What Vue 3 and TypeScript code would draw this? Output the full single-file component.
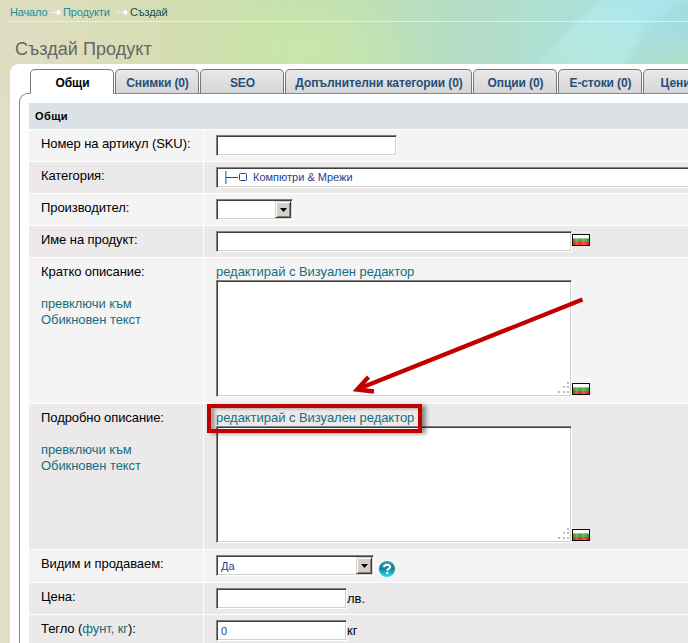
<script setup lang="ts">
interface Tab {
  label: string
  width: number
}

interface Row {
  kind: 'text' | 'category' | 'select' | 'area'
  label: string
  height: number
  width: number
  unitLink?: string
  value?: string
  suffix?: string
  flag?: boolean
  help?: boolean
  switchable?: boolean
  tone: 'light' | 'dark'
}

const tabs: Tab[] = [
  { label: 'Общи', width: 84 },
  { label: 'Снимки (0)', width: 84 },
  { label: 'SEO', width: 84 },
  { label: 'Допълнителни категории (0)', width: 187 },
  { label: 'Опции (0)', width: 84 },
  { label: 'Е-стоки (0)', width: 84 },
  { label: 'Цени', width: 64 },
]

const rows: Row[] = [
  { kind: 'text', label: 'Номер на артикул (SKU):', height: 31, width: 181, tone: 'light' },
  { kind: 'category', label: 'Категория:', height: 31, width: 490, value: 'Компютри & Мрежи', tone: 'dark' },
  { kind: 'select', label: 'Производител:', height: 31, width: 77, tone: 'light' },
  { kind: 'text', label: 'Име на продукт:', height: 31, width: 356, flag: true, tone: 'dark' },
  { kind: 'area', label: 'Кратко описание:', height: 145, width: 356, flag: true, switchable: true, tone: 'light' },
  { kind: 'area', label: 'Подробно описание:', height: 145, width: 356, flag: true, switchable: true, tone: 'dark' },
  { kind: 'select', label: 'Видим и продаваем:', height: 32, width: 158, value: 'Да', help: true, tone: 'light' },
  { kind: 'text', label: 'Цена:', height: 31, width: 131, suffix: 'лв.', tone: 'dark' },
  { kind: 'text', label: 'Тегло', unitLink: 'фунт, кг', height: 31, width: 131, value: '0', suffix: 'кг', tone: 'dark' },
]
</script>

<template>
  <div class="page">
    <header class="top">
      <svg class="sky" viewBox="0 0 688 100" preserveAspectRatio="none">
        <defs>
          <linearGradient id="base" x1="0" x2="1" y1="0" y2="0">
            <stop offset="0" stop-color="#dfdec4" />
            <stop offset=".12" stop-color="#dcddbb" />
            <stop offset=".3" stop-color="#d0deae" />
            <stop offset=".42" stop-color="#c5e2ac" />
            <stop offset=".52" stop-color="#c0e0b4" />
            <stop offset=".68" stop-color="#b3dcc6" />
            <stop offset=".82" stop-color="#aee0d6" />
            <stop offset="1" stop-color="#a4dce0" />
          </linearGradient>
          <linearGradient id="beam" x1="0" x2="1" y1="1" y2="0">
            <stop offset="0" stop-color="#b9e8d8" stop-opacity=".7" />
            <stop offset=".5" stop-color="#b2e8e6" />
            <stop offset="1" stop-color="#a9e2f0" />
          </linearGradient>
          <radialGradient id="glow">
            <stop offset="0" stop-color="#c9e9ac" stop-opacity=".75" />
            <stop offset="1" stop-color="#c9e9ac" stop-opacity="0" />
          </radialGradient>
          <radialGradient id="corner">
            <stop offset="0" stop-color="#b3dfbe" />
            <stop offset="1" stop-color="#b3dfbe" stop-opacity="0" />
          </radialGradient>
          <filter id="soft"><feGaussianBlur stdDeviation="4" /></filter>
        </defs>
        <rect width="688" height="100" fill="url(#base)" />
        <ellipse cx="310" cy="50" rx="110" ry="55" fill="url(#glow)" />
        <path d="M528 70 L600 0 L612 -10 H700 L648 24 L622 74 Z" fill="url(#beam)" filter="url(#soft)" />
        <ellipse cx="688" cy="72" rx="75" ry="38" fill="url(#corner)" />
      </svg>
      <nav class="crumbs">
        <a class="crumb home">Начало</a>
        <svg class="step" width="11" height="7" viewBox="0 0 11 7"><path d="M0 3h1v1H0zM2 3h1v1H2zM4 3h7v1H4zM7 1h2v5H7zM9 2h1v3H9z" /></svg>
        <a class="crumb products">Продукти</a>
        <svg class="step wide" width="11" height="7" viewBox="0 0 11 7"><path d="M0 3h1v1H0zM2 3h1v1H2zM4 3h7v1H4zM7 1h2v5H7zM9 2h1v3H9z" /></svg>
        <span class="crumb here">Създай</span>
      </nav>
      <h1 class="title">Създай Продукт</h1>
    </header>

    <main class="card">
      <div class="tabs">
        <div v-for="(tab, i) in tabs" :key="tab.label" class="tab" :class="{ active: i === 0 }" :style="{ width: tab.width + 'px' }">
          {{ tab.label }}
        </div>
      </div>
      <section class="panel">
        <h2 class="heading">Общи</h2>
        <div v-for="row in rows" :key="row.label" class="row" :class="row.tone" :style="{ height: row.height + 'px' }">
          <div class="label">
            <span v-if="row.unitLink">{{ row.label }} (<a>{{ row.unitLink }}</a>):</span>
            <span v-else>{{ row.label }}</span>
            <a v-if="row.switchable" class="switch">превключи към<br />Обикновен текст</a>
          </div>
          <div class="field">
            <a v-if="row.kind === 'area'" class="visual">редактирай с Визуален редактор</a>
            <div class="line" :class="{ bottom: row.kind === 'area' }">
              <div class="control" :class="row.kind" :style="{ width: row.width + 'px' }">
                <svg v-if="row.kind === 'category'" class="branch" width="22" height="13" viewBox="0 0 22 13">
                  <path d="M.8 0V13" stroke="#4ea3e6" stroke-width="1.6" />
                  <path d="M1 6.500H13" stroke="#26418f" />
                  <rect x="14.500" y="2.500" width="7" height="7" rx="1" fill="none" stroke="#26418f" />
                </svg>
                <span class="value">{{ row.value }}</span>
                <span v-if="row.kind === 'select'" class="drop">
                  <svg width="7" height="4" viewBox="0 0 7 4"><path d="M0 0h7L3.500 4z" /></svg>
                </span>
                <svg v-if="row.kind === 'area'" class="grip" width="11" height="11" viewBox="0 0 11 11">
                  <path d="M9 0h2v2H9zM9 4h2v2H9zM5 4h2v2H5zM9 9h2v2H9zM5 9h2v2H5zM0 9h2v2H0z" fill="#bdbdbd" />
                </svg>
              </div>
              <svg v-if="row.flag" class="flag" width="18" height="12" viewBox="0 0 18 12">
                <defs>
                  <linearGradient id="cloth" x1="0" x2="1" y1="0" y2="0">
                    <stop offset="0" stop-color="#fff" stop-opacity="0" />
                    <stop offset=".25" stop-color="#fff" stop-opacity=".28" />
                    <stop offset=".42" stop-color="#fff" stop-opacity=".05" />
                    <stop offset=".62" stop-color="#fff" stop-opacity=".28" />
                    <stop offset="1" stop-color="#fff" stop-opacity="0" />
                  </linearGradient>
                </defs>
                <rect width="18" height="12" fill="#0a0a0a" />
                <path d="M1 1h16v3H1z" fill="#fdfdfd" />
                <path d="M1 4h16v4H1z" fill="#30a022" />
                <path d="M1 4h16v1H1z" fill="#7cc870" />
                <path d="M1 8h16v3H1z" fill="#ee1818" />
                <path d="M1 4h16v7H1z" fill="url(#cloth)" />
              </svg>
              <svg v-if="row.help" class="help" width="16" height="16" viewBox="0 0 16 16">
                <defs>
                  <linearGradient id="ball" x1="0" x2="0" y1="0" y2="1">
                    <stop offset="0" stop-color="#2fa3bb" />
                    <stop offset=".48" stop-color="#0b8098" />
                    <stop offset=".55" stop-color="#0c93a8" />
                    <stop offset="1" stop-color="#2fe0ec" />
                  </linearGradient>
                </defs>
                <circle cx="8" cy="8" r="8" fill="url(#ball)" />
                <path d="M5 6.300C5 2.800 11.300 3 11.100 6.200C11 8 8.200 7.600 8.200 9.600" fill="none" stroke="#fff" stroke-width="2.100" />
                <rect x="7.100" y="10.800" width="2.200" height="2.200" fill="#fff" />
              </svg>
              <span v-if="row.suffix" class="suffix">{{ row.suffix }}</span>
            </div>
          </div>
        </div>
      </section>
    </main>

    <div class="marker"></div>
    <svg class="arrow" width="240" height="106" viewBox="0 0 240 106">
      <path d="M232.500 9.500L8 99" />
      <path d="M18.500 87L7 99.500L24 101.500" />
    </svg>
  </div>
</template>

<style>
html,
body {
  margin: 0;
  overflow: hidden;
}
</style>

<style scoped>
.page {
  position: relative;
  width: 688px;
  height: 643px;
  overflow: hidden;
  background: #e0dfc5;
  font: 13px/16px "Liberation Sans", Arial, sans-serif;
  color: #000;
}

a {
  color: #186d80;
}

.top {
  position: relative;
  height: 64px;
  box-sizing: border-box;
  padding-left: 10px;
}

.sky {
  position: absolute;
  left: 0;
  top: 0;
  width: 688px;
  height: 100px;
}

.crumbs {
  position: relative;
  display: flex;
  align-items: center;
  height: 22px;
  padding-top: 2px;
  box-sizing: border-box;
  border-bottom: 1px dotted #fff;
  font-size: 11px;
  letter-spacing: -0.15px;
}

.crumb {
  color: #218d96;
  white-space: nowrap;
}

.home {
  width: 37px;
}

.products {
  width: 49px;
}

.here {
  color: #124f55;
}

.step {
  margin: 2px 2px 0 3px;
  fill: #fff;
}

.step.wide {
  margin-left: 5px;
}

.title {
  position: relative;
  margin: 17px 0 0 5px;
  font-size: 18px;
  font-weight: 400;
  line-height: 20px;
  letter-spacing: 0.05px;
  color: #666;
}

.card {
  position: relative;
  margin-left: 10px;
  height: 579px;
  background: #fff;
  border-top-left-radius: 9px;
}

.tabs {
  position: relative;
  z-index: 1;
  display: flex;
  gap: 1px;
  height: 25px;
  padding: 5px 0 0 20px;
  width: 658px;
  overflow: hidden;
}

.tab {
  flex: none;
  box-sizing: border-box;
  height: 25px;
  border: 1px solid #777;
  border-bottom-color: #888;
  border-radius: 5px 5px 0 0;
  background: linear-gradient(#e8e8e8, #d6d6d6);
  color: #264f78;
  padding-left: 1px;
  font-size: 12px;
  font-weight: 700;
  line-height: 26px;
  letter-spacing: -0.1px;
  text-align: center;
  white-space: nowrap;
}

.tab.active {
  background: #fff;
  border-bottom-color: #fff;
  color: #000;
}

.panel {
  margin: -1px 0 0 9px;
  height: 550px;
  border: solid #888;
  border-width: 1px 0 0 1px;
  border-top-left-radius: 9px;
  padding: 9px 0 0 9px;
  box-sizing: border-box;
}

.heading {
  margin: 0;
  height: 26px;
  padding-left: 6px;
  background: #dbe1e4;
  font-size: 11px;
  font-weight: 700;
  line-height: 27px;
  letter-spacing: 0.4px;
}

.row {
  display: grid;
  grid-template-columns: 174px 1fr;
  column-gap: 1px;
  margin-top: 1px;
}

.light > div {
  background: #f4f4f4;
}

.dark > div {
  background: #ebe9ea;
}

.label {
  padding: 6px 0 0 12px;
  letter-spacing: -0.08px;
  white-space: nowrap;
}

.switch {
  display: block;
  margin-top: 16px;
}

.field {
  padding: 5px 0 0 12px;
  min-width: 0;
}

.visual {
  display: block;
  height: 17px;
  line-height: 18px;
  letter-spacing: -0.04px;
  white-space: nowrap;
}

.line {
  display: flex;
  align-items: flex-start;
}

.control {
  position: relative;
  flex: none;
  display: flex;
  align-items: center;
  box-sizing: border-box;
  height: 21px;
  border: 1px solid;
  border-color: #808080 #fff #fff #808080;
  box-shadow: inset 1px 1px #404040, inset -1px -1px #d4d0c8;
  background: #fff;
  padding: 2px 2px 1px 4px;
  color: #26418f;
  font-size: 11px;
  line-height: 14px;
}

.control.area {
  height: 117px;
}

.control.category {
  padding: 1px 2px 2px 8px;
}

.branch {
  margin-right: 6px;
}

.value {
  flex: 1;
  white-space: nowrap;
}

.drop {
  display: flex;
  align-items: center;
  justify-content: center;
  box-sizing: border-box;
  width: 16px;
  height: 17px;
  margin: -1px -1px 0 0;
  border: 1px solid;
  border-color: #d4d0c8 #404040 #404040 #d4d0c8;
  box-shadow: inset 1px 1px #fff, inset -1px -1px #808080;
  background: #d4d0c8;
}

.grip {
  position: absolute;
  right: 2px;
  bottom: 3px;
}

.flag {
  flex: none;
  margin-top: 3px;
}

.bottom .flag {
  align-self: flex-end;
  margin-bottom: 2px;
}

.help {
  margin: 6px 0 0 5px;
}

.suffix {
  margin-top: 3px;
}

.marker {
  position: absolute;
  left: 207px;
  top: 404px;
  width: 215px;
  height: 29px;
  box-sizing: border-box;
  border: 4px solid #c00000;
  box-shadow: 4px 1px 4px rgba(0, 0, 0, 0.4), inset 4px 1px 3px rgba(0, 0, 0, 0.3);
}

.arrow {
  position: absolute;
  left: 350px;
  top: 290px;
  fill: none;
  stroke: #c00000;
  stroke-width: 4.3;
}
</style>
